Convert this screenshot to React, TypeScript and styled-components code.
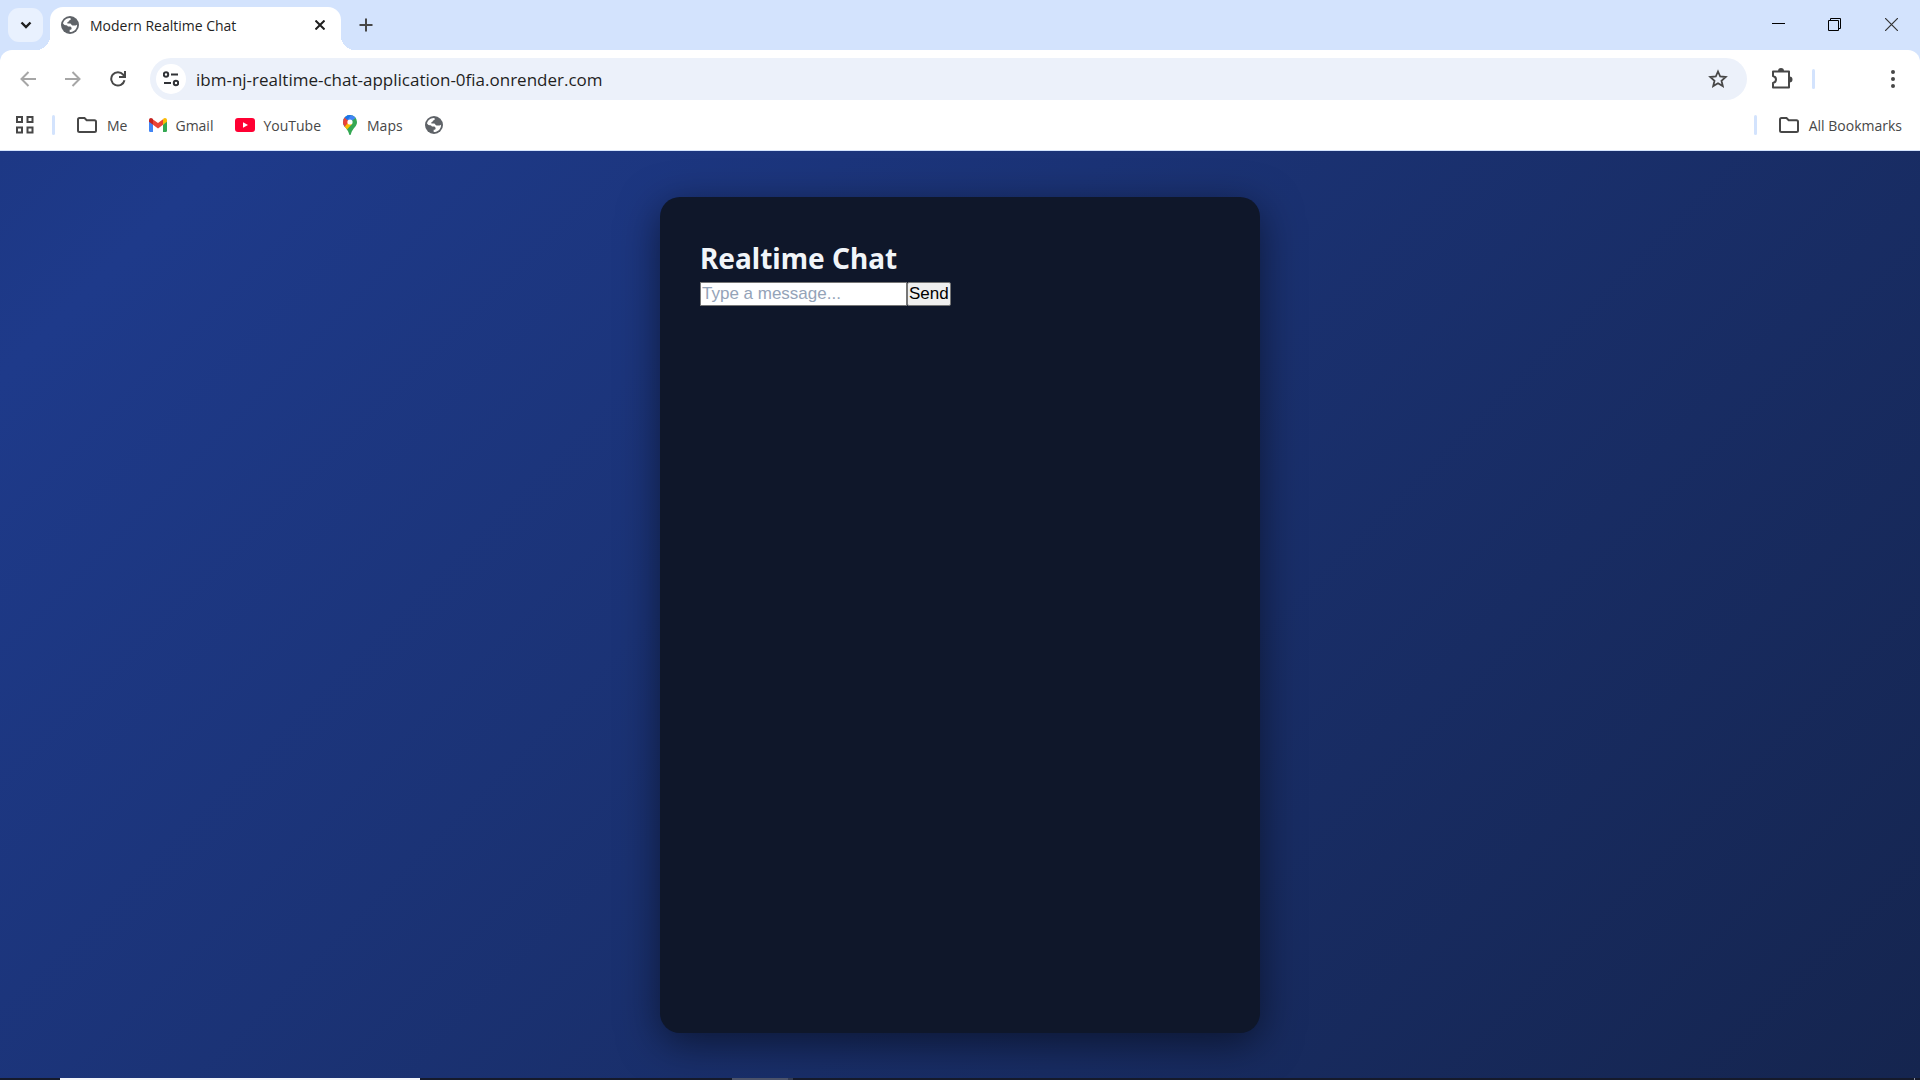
import React from "react";
import styled, { createGlobalStyle } from "styled-components";

const Global = createGlobalStyle`
  *, *::before, *::after { box-sizing: border-box; margin: 0; padding: 0; }
  body { font-family: "Open Sans", "Noto Sans", sans-serif; color: #1f1f1f; }
  button { font: inherit; color: inherit; border: 0; background: none; }
  a { color: inherit; text-decoration: none; }
  svg { display: block; flex: none; }
`;

const Window = styled.div`
  display: flex;
  flex-direction: column;
  min-height: 100vh;
  background: #d3e3fd;
`;

const TabStrip = styled.header`
  display: flex;
  height: 50px;
  padding-left: 8px;
`;

const IconButton = styled.button<{ $w?: number; $h?: number }>`
  display: flex;
  flex: none;
  align-items: center;
  justify-content: center;
  width: ${(p) => p.$w ?? 44}px;
  height: ${(p) => p.$h ?? 40}px;
`;

const TabSearch = styled(IconButton)`
  margin-top: 8px;
  border-radius: 11px;
  background: #e9f1fe;
`;

const Tab = styled.div`
  position: relative;
  display: flex;
  align-items: center;
  width: 291px;
  margin: 7px 0 0 7px;
  padding: 0 11px 7px;
  border-radius: 13px 13px 0 0;
  background: #fff;
  font-size: 14px;

  &::before, &::after {
    content: "";
    position: absolute;
    bottom: 0;
    width: 14px;
    height: 14px;
  }
  &::before { right: 100%; background: radial-gradient(circle at 0 0, transparent 14px, #fff 14px); }
  &::after { left: 100%; background: radial-gradient(circle at 100% 0, transparent 14px, #fff 14px); }
`;

const TabTitle = styled.span`
  flex: 1;
  margin-left: 11px;
  white-space: nowrap;
`;

const WindowControls = styled.div`
  display: flex;
  margin-left: auto;
`;

const Chrome = styled.div`
  border-radius: 12px 12px 0 0;
  background: #fff;
  border-bottom: 1px solid #d3e3fd;
`;

const Toolbar = styled.div`
  display: flex;
  align-items: center;
  height: 58px;
  padding: 0 6px 0 5px;
`;

const AddressBar = styled.div`
  display: flex;
  flex: 1;
  align-items: center;
  height: 42px;
  margin-left: 10px;
  padding: 0 8px 0 6px;
  border-radius: 21px;
  background: #ecf1fa;
`;

const SiteInfo = styled(IconButton)`
  border-radius: 50%;
  background: #fff;
`;

const Address = styled.input`
  flex: 1;
  min-width: 0;
  margin-left: 10px;
  border: 0;
  outline: 0;
  background: transparent;
  color: #1f1f1f;
  font: 17px "Open Sans", "Noto Sans", sans-serif;
`;

const ExtensionsButton = styled(IconButton)`
  padding-left: 4px;
`;

const MenuButton = styled(IconButton)`
  margin-left: 56px;
`;

const Divider = styled.span`
  flex: none;
  width: 3px;
  height: 20px;
  border-radius: 2px;
  background: #d3e3fd;
`;

const LeftDivider = styled(Divider)`
  margin-left: 18px;
`;

const RightDivider = styled(Divider)`
  margin-left: auto;
`;

const Bookmarks = styled.nav`
  display: flex;
  align-items: center;
  height: 42px;
  padding: 0 18px 8px 16px;
  color: #474747;
  font-size: 14px;
`;

const Bookmark = styled.a<{ $gap?: number }>`
  display: flex;
  align-items: center;
  gap: ${(p) => p.$gap ?? 8}px;
  margin-left: 22px;
  white-space: nowrap;
`;

const Page = styled.main`
  display: flex;
  flex: 1;
  justify-content: center;
  padding: 46px 0 45px;
  background: linear-gradient(135deg, #1d3885 0%, #1e3a8a 8%, #15254f 100%);
`;

const Card = styled.section`
  width: 600px;
  padding: 40px;
  border-radius: 20px;
  background: #0f172a;
  box-shadow: 0 10px 40px rgba(0, 0, 0, 0.5);
`;

const Heading = styled.h1`
  margin-bottom: 3px;
  color: #f1f5f9;
  font: 700 28px/42px "Noto Sans", "Open Sans", sans-serif;
`;

const Composer = styled.form`
  display: flex;
  font: 17px "Liberation Sans", Arial, sans-serif;
`;

const Message = styled.input`
  width: 207px;
  height: 24px;
  padding: 1px;
  border: 1px solid #767676;
  background: #fff;
  color: #000;
  font: inherit;
  &::placeholder { color: #94a3b8; }
`;

const Send = styled.button`
  height: 24px;
  padding: 0 1px;
  border: 1px solid #767676;
  border-radius: 2px;
  background: #efefef;
  color: #000;
`;

const Taskbar = styled.footer`
  display: flex;
  height: 2px;
  background: #151a2b;
`;

const TaskItem = styled.span<{ $w: number; $left: number; $color: string }>`
  width: ${(p) => p.$w}px;
  margin-left: ${(p) => p.$left}px;
  background: ${(p) => p.$color};
`;

const DesktopEdge = styled.span`
  width: 1px;
  margin: 0 5px 0 auto;
  background: #8a90a0;
`;

const stroke = { fill: "none", stroke: "#474747", strokeWidth: 2 } as const;

const Globe = () => (
  <svg width="18" height="18" viewBox="0 0 18 18">
    <circle cx="9" cy="9" r="9" fill="#5f6368" />
    <path d="M8.600 1.900C10 2 10.200 3 9.500 3.700L8.300 4.500C7.300 5 7.900 6 6.700 6.200C5.800 6.400 6 7.400 6.800 7.500L9 7.600C10.400 7.700 10.200 9.400 11.500 9.500L14.200 9.400C15.200 9.500 15.900 9 16.100 8.500C16.300 13 13 16.200 8.500 16.100L8.400 13.800C10.200 13.800 10.600 13.100 10.600 12.200C10.500 11.200 9.800 10.600 8.600 10.600L6.700 10.500C4.500 10.400 3.300 9.200 2 7.600C2.500 4.300 5.200 2 8.600 1.900Z" fill="#fff" />
    <path d="M2 9.200L5.400 9.300C7.200 9.500 6.500 12 8.400 12V15.900C4.800 15.700 2.100 12.900 2 9.200Z" fill="#5f6368" />
  </svg>
);

const Folder = () => (
  <svg width="20" height="16" viewBox="0 0 20 16">
    <path d="M1 2.500Q1 1 2.500 1H7.500L9.700 3.200H17.500Q19 3.200 19 4.700V13.500Q19 15 17.500 15H2.500Q1 15 1 13.500Z" {...stroke} />
  </svg>
);

const Apps = () => (
  <svg width="18" height="18" viewBox="0 0 18 18">
    <path d="M1 1h5v5H1zM11.500 1h5v5h-5zM1 11.500h5v5H1zM11.500 11.500h5v5h-5z" {...stroke} />
  </svg>
);

const Gmail = () => (
  <svg width="18" height="14" viewBox="0 0 18 14">
    <path d="M0 2.200V12.800Q0 14 1.200 14H4V6.500L2 3Z" fill="#4285f4" />
    <path d="M18 2.200V12.800Q18 14 16.800 14H14V6.500L16 3Z" fill="#34a853" />
    <path d="M14 1.500V6.700L18 3.700V2.200C18 .2 16-.6 14.500.6Z" fill="#fbbc04" />
    <path d="M4 1.500V6.700L9 10.500L14 6.700V1.300L9 5.100Z" fill="#ea4335" />
    <path d="M0 2.200V3.700L4 6.700V1.200L3.400.6C2-.5 0 .2 0 2.200Z" fill="#c5221f" />
  </svg>
);

const YouTube = () => (
  <svg width="20" height="14" viewBox="0 0 20 14">
    <rect width="20" height="14" rx="3" fill="#ff0033" />
    <path d="M8 4.200L13 7L8 9.800Z" fill="#fff" />
  </svg>
);

const MapPin = () => (
  <svg width="14" height="20" viewBox="0 0 14 20">
    <defs>
      <clipPath id="pin"><path d="M7 0A7 7 0 0 0 0 7C0 9 .7 10.400 1.800 11.800C4 14.500 5.200 16 5.900 18.500C6.200 19.600 6.500 20 7 20S7.800 19.600 8.100 18.500C8.800 16 10 14.500 12.200 11.800C13.300 10.400 14 9 14 7A7 7 0 0 0 7 0Z" /></clipPath>
    </defs>
    <g clipPath="url(#pin)">
      <rect width="14" height="20" fill="#34a853" />
      <path d="M0 0H14V2L7 7L0 13Z" fill="#4285f4" />
      <path d="M0 2L1.600 2.500L7 7L0 14Z" fill="#ea4335" />
      <path d="M1.600 2.500L4 0H8L4.500 5Z" fill="#1a73e8" />
      <path d="M1 12.500L5.300 7.500L9.500 8.500L3.500 15Z" fill="#fbbc04" />
    </g>
    <circle cx="7" cy="7" r="2.600" fill="#fff" />
  </svg>
);

const Arrow = ({ forward }: { forward?: boolean }) => (
  <svg width="16" height="16" viewBox="0 0 16 16" fill="none" stroke="#a6a6a6" strokeWidth="2">
    <path d={forward ? "M0 8H14M7.500 1L14.500 8L7.500 15" : "M16 8H2M8.500 1L1.500 8L8.500 15"} />
  </svg>
);

export default function App() {
  return (
    <Window>
      <Global />
      <TabStrip>
        <TabSearch aria-label="Search tabs" $w={35} $h={34}>
          <svg width="12" height="8" viewBox="0 0 12 8" fill="none" stroke="#1f1f1f" strokeWidth="2.400"><path d="M1.500 1.500L6 6L10.500 1.500" /></svg>
        </TabSearch>
        <Tab>
          <Globe />
          <TabTitle>Modern Realtime Chat</TabTitle>
          <IconButton aria-label="Close tab" $w={20} $h={20}>
            <svg width="10" height="10" viewBox="0 0 10 10" stroke="#1f1f1f" strokeWidth="2"><path d="M.5.5L9.500 9.500M9.500.5L.5 9.500" /></svg>
          </IconButton>
        </Tab>
        <IconButton aria-label="New tab" $w={50} $h={50}>
          <svg width="14" height="14" viewBox="0 0 14 14" {...stroke}><path d="M7 .5V13.500M.5 7H13.500" /></svg>
        </IconButton>
        <WindowControls>
          <IconButton aria-label="Minimize" $w={55} $h={49}>
            <svg width="13" height="13" viewBox="0 0 13 13"><path d="M0 5h13v1H0z" /></svg>
          </IconButton>
          <IconButton aria-label="Restore" $w={57} $h={49}>
            <svg width="13" height="13" viewBox="0 0 13 13" fill="none" stroke="#000"><path d="M.5 2.500h10v10H.5zM2.500 2.500V.5H12.500V10.500H10.500" /></svg>
          </IconButton>
          <IconButton aria-label="Close" $w={57} $h={49}>
            <svg width="13" height="13" viewBox="0 0 13 13" stroke="#333" strokeWidth="1.200"><path d="M0 0L13 13M13 0L0 13" /></svg>
          </IconButton>
        </WindowControls>
      </TabStrip>
      <Chrome>
        <Toolbar>
          <IconButton aria-label="Back" $w={45}><Arrow /></IconButton>
          <IconButton aria-label="Forward" $w={45}><Arrow forward /></IconButton>
          <IconButton aria-label="Reload" $w={45}>
            <svg width="16" height="16" viewBox="0 0 16 16" fill="none" stroke="#474747" strokeWidth="2"><path d="M14.500 9.300A6.700 6.700 0 1 1 13.200 3.700L14.300 5.500M15 0V6H9" /></svg>
          </IconButton>
          <AddressBar>
            <SiteInfo aria-label="View site information" $w={30} $h={30}>
              <svg width="16" height="16" viewBox="0 0 16 16" fill="none" stroke="#303236" strokeWidth="2"><circle cx="3" cy="3.500" r="2.200" /><circle cx="13" cy="12" r="2.200" /><path d="M8 3.500H15M1 12H8" /></svg>
            </SiteInfo>
            <Address aria-label="Address" defaultValue="ibm-nj-realtime-chat-application-0fia.onrender.com" />
            <IconButton aria-label="Bookmark this tab" $w={42}>
              <svg width="20" height="20" viewBox="0 0 20 20" fill="none" stroke="#474747" strokeWidth="1.800"><path d="M10 2.500L12.200 7.500L17.700 8L13.500 11.700L14.800 17.100L10 14.200L5.200 17.100L6.500 11.700L2.300 8L7.800 7.500Z" /></svg>
            </IconButton>
          </AddressBar>
          <ExtensionsButton aria-label="Extensions" $w={65}>
            <svg width="22" height="22" viewBox="0 0 22 22"><path d="M2 3.500H18V19.500H2V15C6 14 6 9 2 8Z" fill="none" stroke="#474747" strokeWidth="2" strokeLinejoin="round" /><path d="M7 3A3 3 0 0 1 13 3ZM18.500 8.500A3 3 0 0 1 18.500 14.500Z" fill="#474747" /></svg>
          </ExtensionsButton>
          <Divider />
          <MenuButton aria-label="Menu" $w={43}>
            <svg width="4" height="18" viewBox="0 0 4 18" fill="#474747"><circle cx="2" cy="2" r="2" /><circle cx="2" cy="9" r="2" /><circle cx="2" cy="16" r="2" /></svg>
          </MenuButton>
        </Toolbar>
        <Bookmarks aria-label="Bookmarks">
          <Apps />
          <LeftDivider />
          <Bookmark href="#" $gap={10}><Folder />Me</Bookmark>
          <Bookmark href="#"><Gmail />Gmail</Bookmark>
          <Bookmark href="#"><YouTube />YouTube</Bookmark>
          <Bookmark href="#" $gap={10}><MapPin />Maps</Bookmark>
          <Bookmark href="#" aria-label="Website"><Globe /></Bookmark>
          <RightDivider />
          <Bookmark href="#" $gap={10}><Folder />All Bookmarks</Bookmark>
        </Bookmarks>
      </Chrome>
      <Page>
        <Card>
          <Heading>Realtime Chat</Heading>
          <Composer onSubmit={(e) => e.preventDefault()}>
            <Message aria-label="Message" placeholder="Type a message..." />
            <Send type="submit">Send</Send>
          </Composer>
        </Card>
      </Page>
      <Taskbar>
        <TaskItem $left={60} $w={360} $color="#f4f6fa" />
        <TaskItem $left={312} $w={56} $color="#4c536a" />
        <TaskItem $left={0} $w={5} $color="#343b51" />
        <DesktopEdge />
      </Taskbar>
    </Window>
  );
}
